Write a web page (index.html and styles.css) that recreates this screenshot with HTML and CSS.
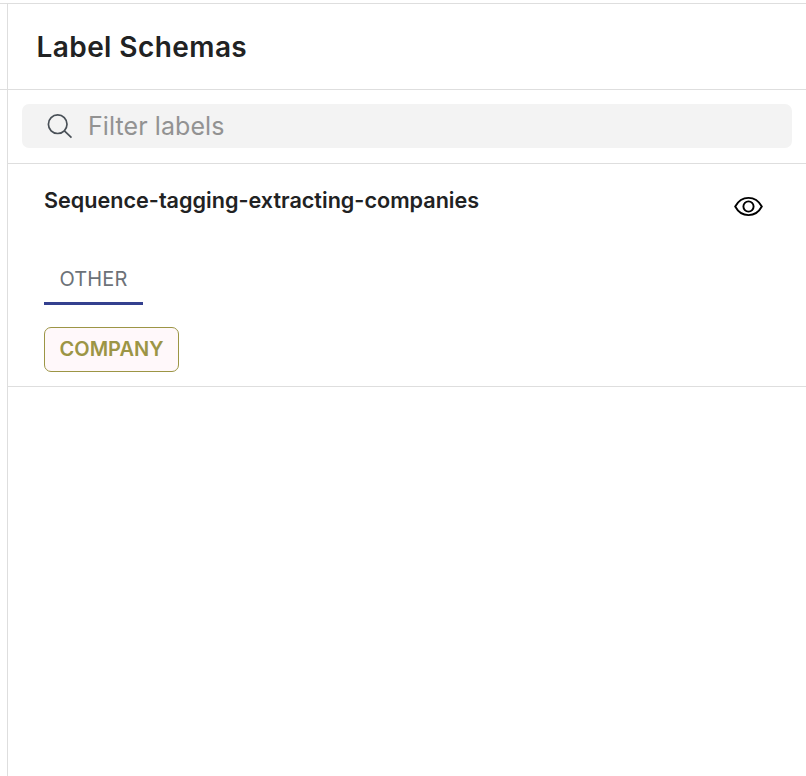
FILE: index.html
```html
<!DOCTYPE html>
<html lang="en">
  <head>
    <meta charset="UTF-8" />
    <title>Label Schemas</title>
    <link rel="stylesheet" href="styles.css">
  </head>
  <body>
    <div class="page">
      <div class="gutter"></div>

      <aside class="panel">
        <header class="panel-header">
          <h1>Label Schemas</h1>
        </header>

        <div class="filter">
          <label class="filter-box">
            <svg class="search-icon" viewBox="0 0 26 26" fill="none">
              <circle cx="10.7" cy="11.2" r="9.3" />
              <path d="M17.4 17.9 L24.5 24.7" />
            </svg>
            <input type="text" placeholder="Filter labels" />
          </label>
        </div>

        <section class="schema">
          <div class="schema-header">
            <h2>Sequence-tagging-extracting-companies</h2>
            <button class="icon-button" aria-label="Toggle labels">
              <svg viewBox="0 0 30 20" fill="none">
                <path d="M1.2 10.5 C7.4 -1 21.6 -1 27.8 10.5 C21.6 22 7.4 22 1.2 10.5 Z" />
                <circle cx="14.5" cy="10.5" r="5.1" />
              </svg>
            </button>
          </div>

          <div class="tabs">
            <button class="tab">OTHER</button>
          </div>

          <div class="labels">
            <span class="label">COMPANY</span>
          </div>
        </section>
      </aside>
    </div>
  </body>
</html>
```
FILE: styles.css
```css
:root {
  --border: #dedede;
  --text: #212223;
  --text-light: #6c7278;
  --field: #f3f3f3;
  --primary: #34408f;
  --label: #9c9545;
}

* {
  margin: 0;
  padding: 0;
  box-sizing: border-box;
}

body {
  font-family: Inter, "Liberation Sans", sans-serif;
  background: #ffffff;
  color: var(--text);
}

.page {
  display: flex;
  height: 100vh;
  padding-top: 3px;
}

.gutter {
  width: 7px;
  height: 87px;
  border-top: 1px solid var(--border);
  border-bottom: 1px solid var(--border);
}

.panel {
  flex: 1;
  border-top: 1px solid var(--border);
  border-left: 1px solid var(--border);
}

.panel-header {
  display: flex;
  align-items: center;
  height: 86px;
  padding-left: 28.5px;
  border-bottom: 1px solid var(--border);
}

h1 {
  font-size: 28px;
  font-weight: 600;
  line-height: 34px;
  letter-spacing: 0.42px;
}

.filter {
  padding: 14px 14px 15px;
  border-bottom: 1px solid var(--border);
}

.filter-box {
  display: flex;
  align-items: center;
  gap: 15px;
  height: 44px;
  padding: 0 25px;
  background: var(--field);
  border-radius: 7px;
}

.search-icon {
  width: 26px;
  height: 26px;
  stroke: #495057;
  stroke-width: 1.7;
}

.filter-box input {
  flex: 1;
  border: none;
  outline: none;
  background: none;
  font-family: inherit;
  font-size: 25px;
  letter-spacing: 0.08px;
  color: var(--text);
}

.filter-box input::placeholder {
  color: #929292;
}

.schema {
  padding: 24px 42px 14px 36px;
  border-bottom: 1px solid var(--border);
}

.schema-header {
  display: flex;
  justify-content: space-between;
  height: 28px;
}

h2 {
  font-size: 21.6px;
  font-weight: 600;
  line-height: 25px;
}

.icon-button {
  width: 30px;
  height: 20px;
  margin-top: 8px;
  border: none;
  background: none;
  cursor: pointer;
}

.icon-button svg {
  display: block;
  width: 30px;
  height: 20px;
  overflow: visible;
  stroke: #000000;
  stroke-width: 1.9;
}

.tabs {
  display: flex;
  margin-top: 38px;
}

.tab {
  width: 99px;
  height: 51px;
  padding-top: 2px;
  border: none;
  border-bottom: 3px solid var(--primary);
  background: none;
  font-family: inherit;
  font-size: 20px;
  letter-spacing: 0.1px;
  color: var(--text-light);
  cursor: pointer;
}

.labels {
  display: flex;
  margin-top: 22px;
}

.label {
  width: 135px;
  height: 45px;
  border: 1px solid var(--label);
  border-radius: 7px;
  background: #fff8fa;
  color: var(--label);
  font-size: 20px;
  font-weight: 600;
  line-height: 43px;
  text-align: center;
}
```
